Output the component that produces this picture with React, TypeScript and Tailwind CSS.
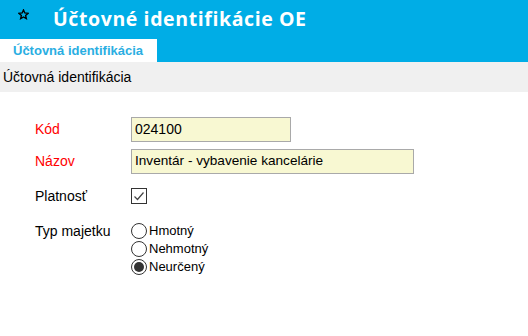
const radios = [
  { label: "Hmotný", checked: false },
  { label: "Nehmotný", checked: false },
  { label: "Neurčený", checked: true },
];

const Star = () => (
  <svg width="11" height="11" viewBox="0 0 24 24" className="shrink-0">
    <polygon
      points="12,2 14.9,8.6 22,9.3 16.6,14 18.2,21 12,17.3 5.8,21 7.4,14 2,9.3 9.1,8.6"
      fill="none"
      stroke="#000"
      strokeWidth="3"
      strokeLinejoin="miter"
    />
  </svg>
);

const App = () => {
  return (
    <div className="w-[528px] h-[336px] bg-white overflow-hidden font-['Liberation_Sans',Arial,sans-serif]">
      <div className="h-[62px] bg-[#00ade6] flex flex-col">
        <div className="flex items-start pt-[9px] pl-[18px]">
          <Star />
          <h1 className="ml-[24px] text-white font-bold text-[19.5px] leading-[20px] tracking-[0.6px] font-['Open_Sans',sans-serif]">
            Účtovné identifikácie OE
          </h1>
        </div>
        <div className="mt-auto w-[157px] h-[23px] bg-white pl-[13px] flex items-center">
          <span className="text-[#2aaee2] font-bold text-[13px]">Účtovná identifikácia</span>
        </div>
      </div>

      <div className="h-[30px] bg-[#f0f0f0] flex items-center pl-[3px] text-[14px] text-black">
        Účtovná identifikácia
      </div>

      <div className="pl-[35px] pt-[25px] text-[14px] text-black">
        <div className="flex items-center h-[25px]">
          <label className="w-[96px] text-[#ff0000]">Kód</label>
          <div className="w-[160px] h-[25px] border border-[#a9a9a9] bg-[#f8f8d2] flex items-center pl-[3px]">
            024100
          </div>
        </div>

        <div className="flex items-center h-[25px] mt-[7px]">
          <label className="w-[96px] text-[#ff0000]">Názov</label>
          <div className="w-[283px] h-[25px] border border-[#a9a9a9] bg-[#f8f8d2] flex items-center pl-[3px] text-[13.6px]">
            Inventár - vybavenie kancelárie
          </div>
        </div>

        <div className="flex items-center h-[16px] mt-[14px]">
          <label className="w-[96px]">Platnosť</label>
          <div className="w-[16px] h-[16px] border border-[#333] bg-white flex items-center justify-center">
            <svg width="12" height="12" viewBox="0 0 12 12">
              <polyline points="1.5,6.5 4.5,9.5 10.5,2.5" fill="none" stroke="#444" strokeWidth="1.2" />
            </svg>
          </div>
        </div>

        <div className="flex items-start mt-[18px]">
          <label className="w-[96px] h-[18px] flex items-center">Typ majetku</label>
          <div className="flex flex-col">
            {radios.map((r) => (
              <div key={r.label} className="flex items-center h-[18px]">
                <div className="w-[16px] h-[16px] rounded-full border border-[#333] bg-white flex items-center justify-center">
                  {r.checked && <div className="w-[10px] h-[10px] rounded-full bg-[#333]" />}
                </div>
                <span className="ml-[2px] text-[13px]">{r.label}</span>
              </div>
            ))}
          </div>
        </div>
      </div>
    </div>
  );
};

export default App;
